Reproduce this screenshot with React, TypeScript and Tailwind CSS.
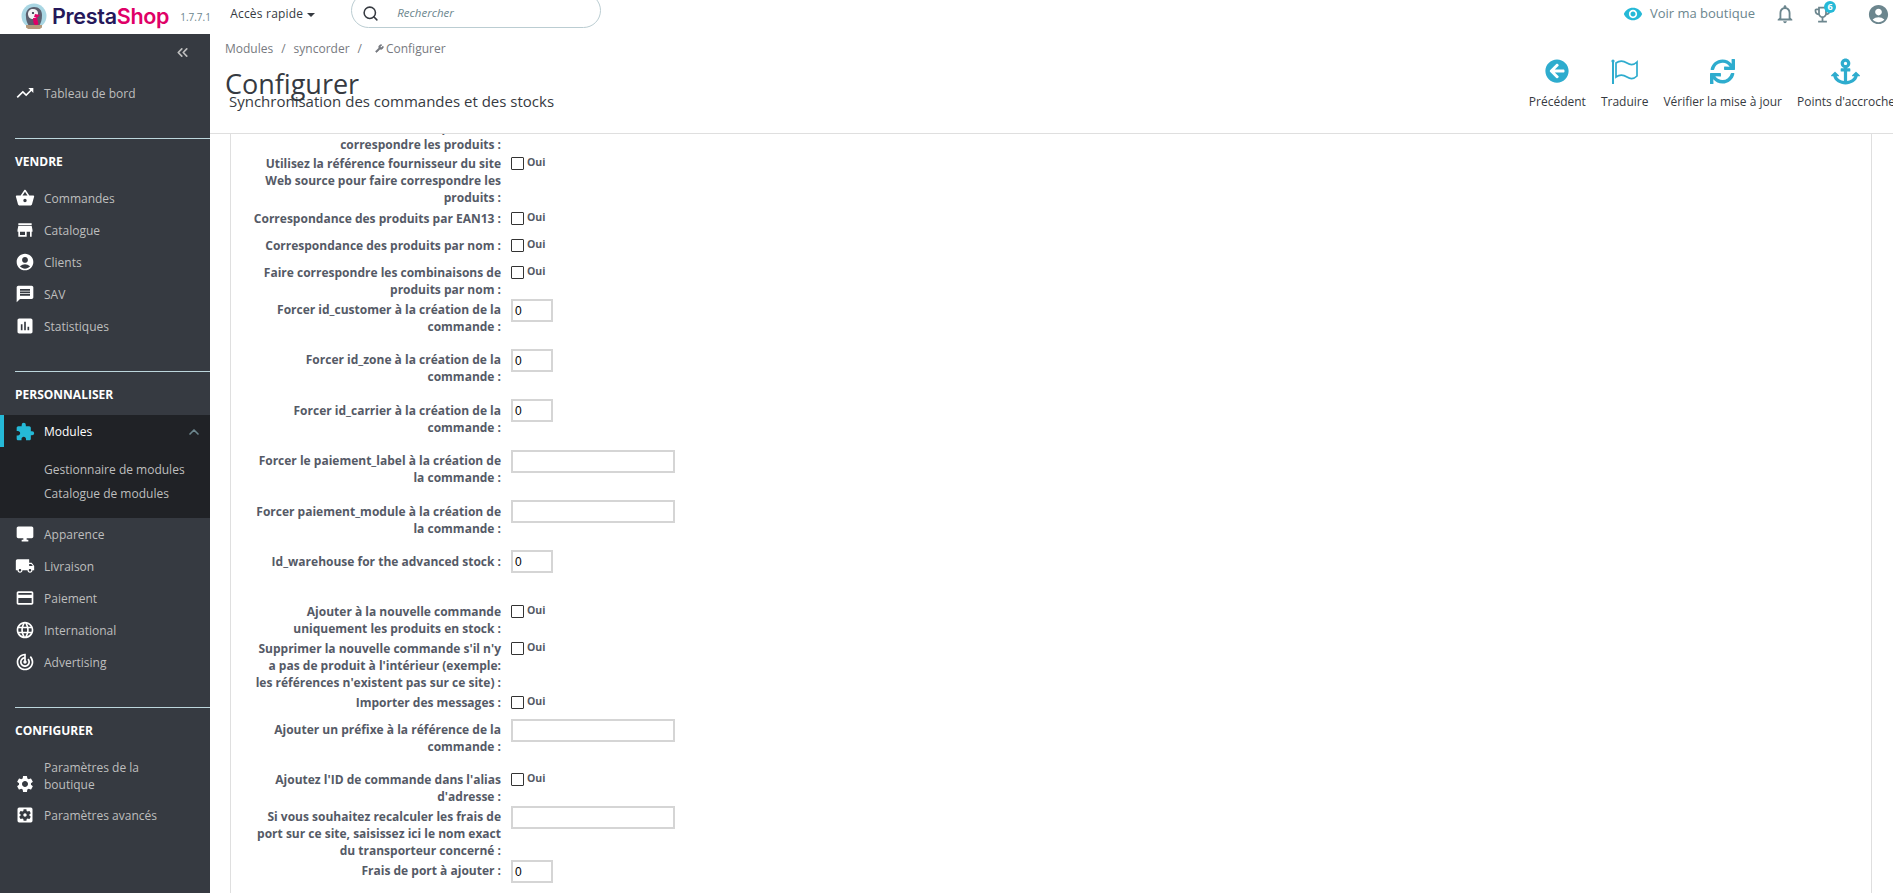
import React from "react";
import { Search, ChevronUp, ChevronsLeft, Wrench } from "lucide-react";
import {
  MdTrendingUp, MdShoppingBasket, MdStore, MdAccountCircle, MdMessage, MdAssessment,
  MdExtension, MdDesktopWindows, MdLocalShipping, MdCreditCard, MdLanguage, MdTrackChanges,
  MdSettings, MdSettingsApplications, MdVisibility, MdOutlineEmojiEvents, MdNotificationsNone,
} from "react-icons/md";
import { FaArrowCircleLeft, FaSync, FaAnchor } from "react-icons/fa";

const Item = ({ icon: I, label }: { icon: any; label: string }) => (
  <div className="flex items-center h-[32px] pl-[15px] text-[12px] leading-[17px] text-[#bebebe]">
    <I className="w-[20px] h-[20px] text-white mr-[9px] shrink-0" />
    <span>{label}</span>
  </div>
);

const Section = ({ title }: { title: string }) => (
  <div className="ml-[15px] mt-[29px] border-t border-[#bcd6dc] pt-[14px] text-[12px] font-bold text-white leading-[18px] h-[44px]">
    {title}
  </div>
);

const Row = ({ h, label, kind, up }: { h: number; label: React.ReactNode; kind: "check" | "num" | "text" | "none"; up?: boolean }) => (
  <div className="flex" style={{ height: h }}>
    <div className="w-[270px] text-right text-[12px] font-bold leading-[17px] text-[#555a66] shrink-0 whitespace-nowrap">
      {label}
    </div>
    <div className="ml-[10px]">
      {kind === "check" && (
        <div className="flex items-start">
          <span className="block w-[13px] h-[13px] border border-[#333] rounded-[1px] bg-white mt-[2px]" />
          <span className="ml-[3px] text-[10.5px] font-bold leading-[12px] text-[#555a66] mt-[1px]">Oui</span>
        </div>
      )}
      {kind === "num" && (
        <div className={`${up ? "-mt-[3px]" : "-mt-[2px]"} w-[42px] h-[23px] border-2 border-[#d5d5d5] text-[12px] leading-[20px] pl-[2px] text-black font-['Liberation_Sans',sans-serif]`}>
          0
        </div>
      )}
      {kind === "text" && <div className={`${up ? "-mt-[3px]" : "-mt-[2px]"} w-[164px] h-[23px] border-2 border-[#d5d5d5]`} />}
    </div>
  </div>
);

const Act = ({ icon, label }: { icon: React.ReactNode; label: string }) => (
  <div className="flex flex-col items-center shrink-0">
    <div className="h-[34px] flex items-center justify-center">{icon}</div>
    <div className="text-[12px] leading-[18px] text-[#363a41] mt-[5px] whitespace-nowrap">{label}</div>
  </div>
);

const Logo = () => (
  <svg viewBox="0 0 26 26" className="w-[26px] h-[26px] shrink-0">
    <circle cx="13" cy="13" r="12.5" fill="#a9d6e3" />
    <path d="M5 14c-1-6 3-10 8-10s8 3 8 8c0 5-1 8-3 11H8c-2-3-3-6-3-9z" fill="#5b5f6e" />
    <path d="M7 11c0-3 2-5 5-5s5 2 5 4c0 3-2 6-5 6s-5-2-5-5z" fill="#f1f3f4" />
    <circle cx="12" cy="10" r="1.1" fill="#25283d" />
    <path d="M14 11l5 1-3 3-3-1z" fill="#df0067" />
    <path d="M12 15h4l1.5 6-3 2-2-3z" fill="#df0067" />
    <path d="M5 22h16v2.5a12.5 12.5 0 0 1-16 0z" fill="#b49a7c" />
  </svg>
);

const Flag = () => (
  <svg viewBox="0 0 28 26" className="w-[28px] h-[26px]" fill="none" stroke="#2eacce">
    <circle cx="2" cy="3" r="1.6" fill="#2eacce" stroke="none" />
    <path d="M2 3v23" strokeWidth="2" />
    <path d="M5 5c4-3 8-2 11 0s7 2 10-1v14c-3 3-7 3-10 1s-7-3-11 0z" strokeWidth="1.7" />
  </svg>
);

export default function App() {
  return (
    <div className="h-[893px] w-[1893px] overflow-hidden bg-white flex flex-col font-['Open_Sans',sans-serif] text-[#363a41]">
      <header className="h-[34px] shrink-0 flex items-center bg-white">
        <div className="ml-[21px] -mt-[3px]"><Logo /></div>
        <div className="ml-[5px] -mt-[3px] text-[21.5px] leading-[26px] font-semibold tracking-[-0.3px] font-['Inter',sans-serif] text-[#25185a]">
          Presta<span className="text-[#df0067]">Shop</span>
        </div>
        <div className="ml-[11px] text-[10px] text-[#6c868e] w-[31px] whitespace-nowrap">1.7.7.1</div>
        <div className="ml-[19px] -mt-[6px] text-[12px] tracking-[0.2px] text-[#363a41] flex items-center">
          Accès rapide
          <svg viewBox="0 0 10 5" className="w-[8px] h-[4px] ml-[4px] mt-[2px]"><path d="M0 0h10L5 5z" fill="#363a41" /></svg>
        </div>
        <div className="ml-[36px] -mt-[13px] w-[250px] h-[35px] border border-[#bbcdd2] rounded-[18px] flex items-center pl-[10px] pt-[5px] shrink-0">
          <Search className="w-[17px] h-[17px] text-[#363a41]" strokeWidth={2.2} />
          <span className="ml-[18px] text-[11.5px] italic text-[#6c868e]">Rechercher</span>
        </div>
        <div className="ml-auto flex items-center -mt-[6px]">
          <MdVisibility className="w-[20px] h-[20px] text-[#25b9d7]" />
          <span className="ml-[7px] text-[13px] text-[#6c868e] whitespace-nowrap">Voir ma boutique</span>
          <MdNotificationsNone className="ml-[19px] w-[22px] h-[22px] text-[#6c868e]" />
          <div className="relative ml-[16px] w-[21px] h-[21px]">
            <MdOutlineEmojiEvents className="w-[21px] h-[21px] text-[#6c868e]" />
            <span className="absolute -top-[3px] left-[12px] w-[12px] h-[12px] rounded-full bg-[#25b9d7] text-white text-[9px] font-bold leading-[12px] text-center">6</span>
          </div>
          <MdAccountCircle className="ml-[34px] mr-[3px] w-[23px] h-[23px] text-[#6c868e]" />
        </div>
      </header>
      <div className="flex-1 flex min-h-0">
        <aside className="w-[210px] shrink-0 bg-[#363a41]">
          <div className="h-[36px] flex justify-end items-center pr-[19px]">
            <ChevronsLeft className="w-[17px] h-[17px] text-[#bebebe]" strokeWidth={2.4} />
          </div>
          <div className="mt-[7px]"><Item icon={MdTrendingUp} label="Tableau de bord" /></div>
          <Section title="VENDRE" />
          <Item icon={MdShoppingBasket} label="Commandes" />
          <Item icon={MdStore} label="Catalogue" />
          <Item icon={MdAccountCircle} label="Clients" />
          <Item icon={MdMessage} label="SAV" />
          <Item icon={MdAssessment} label="Statistiques" />
          <Section title="PERSONNALISER" />
          <div className="bg-[#202226] h-[103px]">
            <div className="h-[32px] pt-[2px] flex items-center pl-[11px] border-l-[4px] border-[#25b9d7] text-[12px] text-white relative">
              <MdExtension className="w-[20px] h-[20px] text-[#25b9d7] mr-[9px]" />
              Modules
              <ChevronUp className="absolute right-[8px] w-[16px] h-[16px] text-[#6c868e]" strokeWidth={2.5} />
            </div>
            <div className="pl-[44px] pt-[11px] text-[12px] leading-[24px] text-[#bebebe]">
              <div>Gestionnaire de modules</div>
              <div>Catalogue de modules</div>
            </div>
          </div>
          <Item icon={MdDesktopWindows} label="Apparence" />
          <Item icon={MdLocalShipping} label="Livraison" />
          <Item icon={MdCreditCard} label="Paiement" />
          <Item icon={MdLanguage} label="International" />
          <Item icon={MdTrackChanges} label="Advertising" />
          <Section title="CONFIGURER" />
          <div className="flex items-center h-[48px] pt-[2px] pl-[15px] text-[12px] leading-[17px] text-[#bebebe]">
            <MdSettings className="w-[20px] h-[20px] text-white mr-[9px] shrink-0 mt-[16px]" />
            <span>Paramètres de la<br />boutique</span>
          </div>
          <Item icon={MdSettingsApplications} label="Paramètres avancés" />
        </aside>
        <main className="flex-1 min-w-0 flex flex-col">
          <div className="h-[100px] shrink-0 border-b border-[#dfdfdf] flex">
            <div className="pl-[15px] flex-1 min-w-0">
              <div className="pt-[6px] text-[12px] leading-[17px] text-[#777a80] flex items-center whitespace-nowrap">
                Modules<span className="mx-[8px]">/</span>syncorder<span className="mx-[8px]">/</span>
                <Wrench className="w-[9px] h-[9px] ml-[5px] mr-[2px] text-[#777a80] fill-[#777a80]" />Configurer
              </div>
              <h1 className="mt-[10px] text-[27px] leading-[34px] text-[#363a41] font-normal">Configurer</h1>
              <div className="-mt-[9px] ml-[4px] text-[15px] leading-[19px] text-[#363a41] whitespace-nowrap">
                Synchronisation des commandes et des stocks
              </div>
            </div>
            <div className="flex shrink-0 gap-[15px] pt-[20px] -mr-[2px]">
              <Act icon={<FaArrowCircleLeft className="w-[24px] h-[24px] text-[#2eacce]" />} label="Précédent" />
              <Act icon={<Flag />} label="Traduire" />
              <Act icon={<FaSync className="w-[25px] h-[25px] text-[#2eacce]" />} label="Vérifier la mise à jour" />
              <Act icon={<FaAnchor className="w-[29px] h-[29px] text-[#2eacce]" />} label="Points d'accroche" />
            </div>
          </div>
          <div className="flex-1 min-h-0 overflow-hidden">
            <div className="ml-[20px] w-[1642px] h-[800px] border-x border-[#dfdfdf]">
              <div className="-mt-[15px]">
                <Row h={36} kind="none" label={<>source pour faire<br />correspondre les produits :</>} />
                <Row h={55} kind="check" label={<>Utilisez la référence fournisseur du site<br />Web source pour faire correspondre les<br />produits :</>} />
                <Row h={27} kind="check" label="Correspondance des produits par EAN13 :" />
                <Row h={27} kind="check" label="Correspondance des produits par nom :" />
                <Row h={37} kind="check" label={<>Faire correspondre les combinaisons de<br />produits par nom :</>} />
                <Row h={50} kind="num" label={<>Forcer id_customer à la création de la<br />commande :</>} />
                <Row h={51} kind="num" label={<>Forcer id_zone à la création de la<br />commande :</>} />
                <Row h={50} kind="num" up label={<>Forcer id_carrier à la création de la<br />commande :</>} />
                <Row h={51} kind="text" label={<>Forcer le paiement_label à la création de<br />la commande :</>} />
                <Row h={50} kind="text" up label={<>Forcer paiement_module à la création de<br />la commande :</>} />
                <Row h={50} kind="num" up label="Id_warehouse for the advanced stock :" />
                <Row h={37} kind="check" label={<>Ajouter à la nouvelle commande<br />uniquement les produits en stock :</>} />
                <Row h={54} kind="check" label={<>Supprimer la nouvelle commande s'il n'y<br />a pas de produit à l'intérieur (exemple:<br />les références n'existent pas sur ce site) :</>} />
                <Row h={27} kind="check" label="Importer des messages :" />
                <Row h={50} kind="text" label={<>Ajouter un préfixe à la référence de la<br />commande :</>} />
                <Row h={37} kind="check" label={<>Ajoutez l'ID de commande dans l'alias<br />d'adresse :</>} />
                <Row h={54} kind="text" label={<>Si vous souhaitez recalculer les frais de<br />port sur ce site, saisissez ici le nom exact<br />du transporteur concerné :</>} />
                <Row h={30} kind="num" label="Frais de port à ajouter :" />
              </div>
            </div>
          </div>
        </main>
      </div>
    </div>
  );
}
